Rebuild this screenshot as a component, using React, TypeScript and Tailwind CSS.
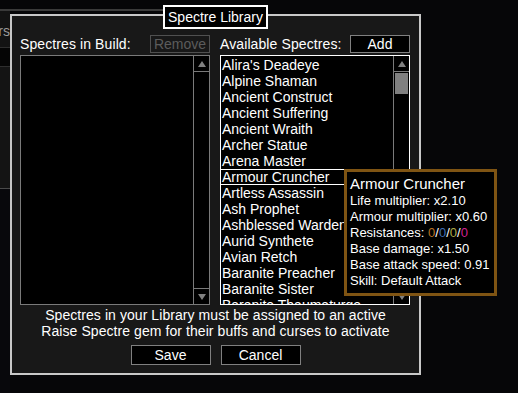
import React from "react";

const spectres = [
  "Alira's Deadeye",
  "Alpine Shaman",
  "Ancient Construct",
  "Ancient Suffering",
  "Ancient Wraith",
  "Archer Statue",
  "Arena Master",
  "Armour Cruncher",
  "Artless Assassin",
  "Ash Prophet",
  "Ashblessed Warden",
  "Aurid Synthete",
  "Avian Retch",
  "Baranite Preacher",
  "Baranite Sister",
  "Baranite Thaumaturge",
];

function Arrow({ down = false }: { down?: boolean }) {
  return (
    <svg width="8" height="6" viewBox="0 0 8 6">
      <polygon points={down ? "0,0 8,0 4,6" : "0,6 4,0 8,6"} fill="#808080" />
    </svg>
  );
}

// barre de défilement à droite des listes
function Scrollbar({ thumb = false }: { thumb?: boolean }) {
  return (
    <div className="w-[16px] shrink-0 border-l border-[#7a7a7a] flex flex-col">
      <div className="h-[16px] border-b border-[#7a7a7a] flex items-center justify-center">
        <Arrow />
      </div>
      <div className="flex-1 flex flex-col">
        {thumb && <div className="mx-[1px] mt-[1px] h-[21px] bg-[#808080]" />}
      </div>
      <div className="h-[16px] border-t border-[#7a7a7a] flex items-center justify-center">
        <Arrow down />
      </div>
    </div>
  );
}

export default function App() {
  const hovered = "Armour Cruncher";

  return (
    <div className="relative w-[518px] h-[393px] overflow-hidden bg-[#060608] text-white text-[14px] leading-[16px] font-['Liberation_Sans',sans-serif]">
      {/* fenêtre derrière le dialogue */}
      <div className="flex flex-col w-[165px] h-full">
        <div className="h-[9px]" />
        <div className="h-[2px] w-[165px] bg-[#3a3a3a]" />
        <div className="h-[36px] w-[10px] bg-[#131313] flex items-end justify-end pb-[8px] overflow-hidden">
          <span className="whitespace-nowrap text-[#9a9a9a]">Others</span>
        </div>
        <div className="h-[1px] w-[10px] bg-[#2e2e2e]" />
        <div className="h-[18px] w-[10px] bg-[#050505]" />
        <div className="h-[1px] w-[10px] bg-[#2e2e2e]" />
        <div className="h-[121px] w-[10px] bg-[#141414]" />
        <div className="h-[1px] w-[10px] bg-[#4a4a4a]" />
        <div className="flex-1 w-[10px] bg-[#08080c]" />
      </div>

      {/* DIALOGUE */}
      <div className="absolute left-[10px] top-[14px] w-[411px] h-[361px] border-2 border-[#c8c8c8] bg-[#181818] flex flex-col">
        <div className="self-center -mt-[11px] h-[24px] w-[105px] border-2 border-white bg-black flex items-center justify-center whitespace-nowrap">
          Spectre Library
        </div>

        <div className="mt-[6px] px-[8px] flex gap-[10px]">
          {/* colonne gauche */}
          <div className="w-[190px] flex flex-col">
            <div className="h-[18px] flex items-center justify-between">
              <span className="tracking-[0.1px]">Spectres in Build:</span>
              <div className="w-[60px] h-[18px] border border-[#505050] flex items-center justify-center text-[#5c5c5c]">
                Remove
              </div>
            </div>
            <div className="mt-[2px] h-[250px] border border-[#7a7a7a] bg-black flex">
              <div className="flex-1" />
              <Scrollbar />
            </div>
          </div>

          {/* colonne droite */}
          <div className="w-[190px] flex flex-col">
            <div className="h-[18px] flex items-center justify-between">
              <span className="tracking-[0.1px]">Available Spectres:</span>
              <div className="w-[60px] h-[18px] border border-[#808080] bg-black flex items-center justify-center">
                Add
              </div>
            </div>
            <div className="mt-[2px] h-[250px] border border-white bg-black flex overflow-hidden">
              <div className="flex-1 min-w-0 pt-[1px] flex flex-col overflow-hidden">
                {spectres.map((s) => (
                  <div
                    key={s}
                    className={`h-[16px] shrink-0 pl-[1px] whitespace-nowrap ${
                      s === hovered ? "shadow-[inset_0_1px_0_#fff,inset_0_-1px_0_#fff]" : ""
                    }`}
                  >
                    {s}
                  </div>
                ))}
              </div>
              <Scrollbar thumb />
            </div>
          </div>
        </div>

        <div className="mt-[2px] text-center tracking-[0.07px]">
          <p>Spectres in your Library must be assigned to an active</p>
          <p>Raise Spectre gem for their buffs and curses to activate</p>
        </div>

        <div className="mt-[6px] flex justify-center gap-[10px]">
          <div className="w-[80px] h-[20px] border border-[#808080] bg-black flex items-center justify-center">
            Save
          </div>
          <div className="w-[80px] h-[20px] border border-[#808080] bg-black flex items-center justify-center">
            Cancel
          </div>
        </div>
      </div>

      {/* INFOBULLE */}
      <div className="absolute left-[344px] top-[169px] w-[153px] h-[127px] border-[3px] border-[#7f5413] bg-black px-[3px] pt-[3px] whitespace-nowrap text-[13px] leading-[16px]">
        <p className="text-[15px] leading-[18px]">Armour Cruncher</p>
        <p>Life multiplier: x2.10</p>
        <p>Armour multiplier: x0.60</p>
        <p>
          Resistances: <span className="text-[#b97123]">0</span>/
          <span className="text-[#3f6db3]">0</span>/
          <span className="text-[#adaa47]">0</span>/
          <span className="text-[#d02090]">0</span>
        </p>
        <p>Base damage: x1.50</p>
        <p>Base attack speed: 0.91</p>
        <p>Skill: Default Attack</p>
      </div>
    </div>
  );
}
